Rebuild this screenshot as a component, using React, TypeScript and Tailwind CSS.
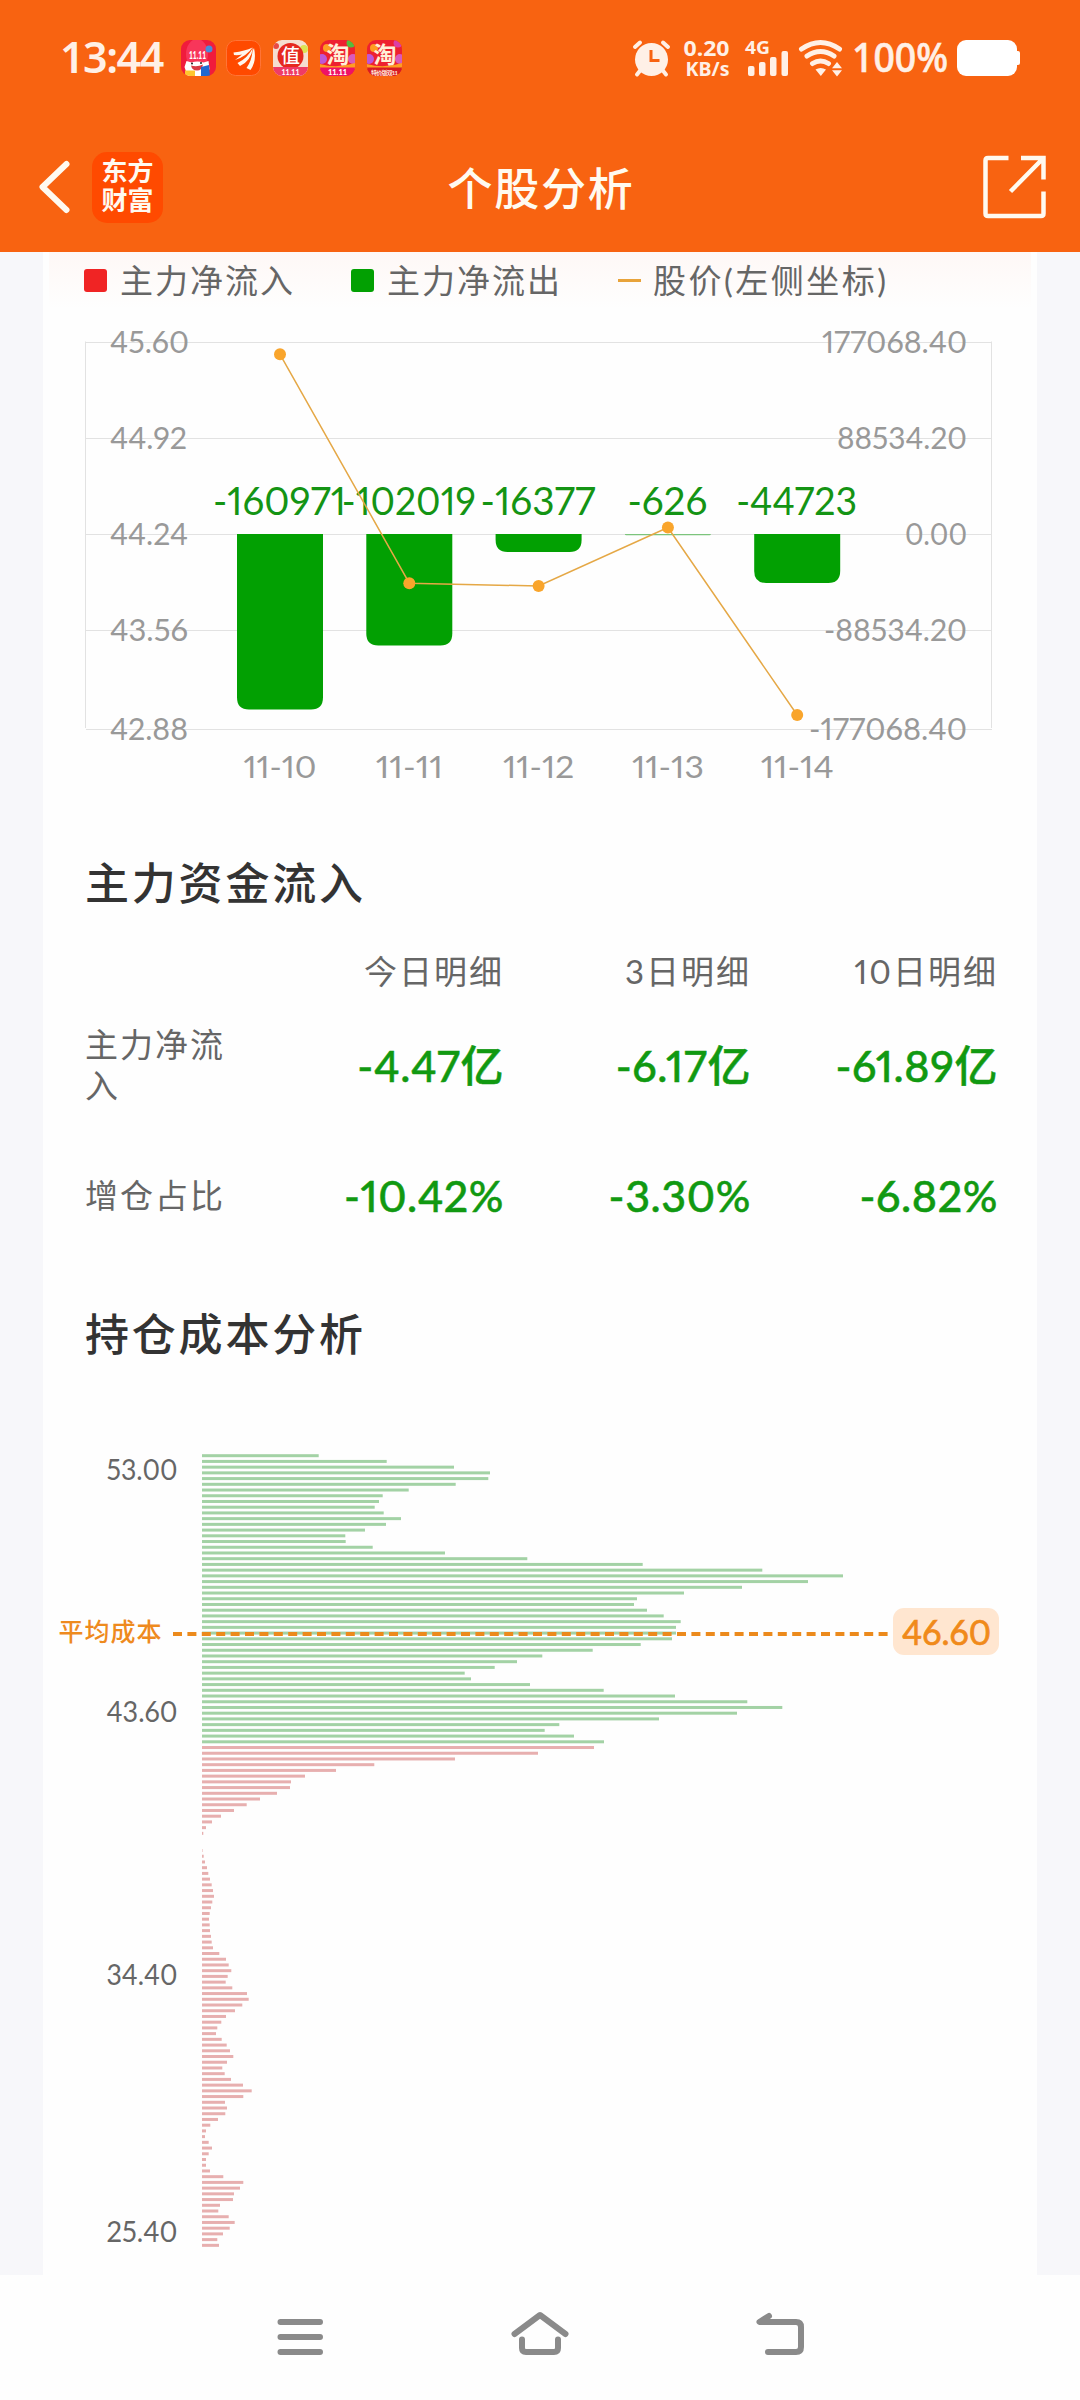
import { Fragment } from "react";

const GRID_LINES = [
  { y: 342.5, price: "45.60", left: 77, flow: "177068.40", right: 143 },
  { y: 438.5, price: "44.92", left: 75, flow: "88534.20", right: 128 },
  { y: 534.5, price: "44.24", left: 76, flow: "0.00", right: 60 },
  { y: 630.5, price: "43.56", left: 76, flow: "-88534.20", right: 141 },
  { y: 729.5, price: "42.88", left: 76, flow: "-177068.40", right: 156 },
];

const DAYS = [
  { date: "11-10", x: 280, flow: "-160971", flowWidth: 131, dateWidth: 71, bottom: 709.5, price: 354.3 },
  { date: "11-11", x: 409.3, flow: "-102019", flowWidth: 132, dateWidth: 65, bottom: 645.5, price: 583.2 },
  { date: "11-12", x: 538.6, flow: "-16377", flowWidth: 113, dateWidth: 69, bottom: 552, price: 586 },
  { date: "11-13", x: 667.9, flow: "-626", flowWidth: 78, dateWidth: 70, bottom: 535.3, price: 527.5 },
  { date: "11-14", x: 797.2, flow: "-44723", flowWidth: 119, dateWidth: 71, bottom: 583, price: 715 },
];

const COSTS = [
  116.7, 184.7, 252, 288, 286.3, 253.7, 206.7, 180.7, 177, 172.7, 181.7, 199, 184, 163, 143.3, 143.7, 170.7, 243,
  325.3, 440.7, 560.3, 641, 606, 540, 482, 435, 432, 445, 461.7, 478.7, 474, 474, 470, 438.7, 390.7, 340.3, 315,
  292.7, 262.7, 269, 328, 401.7, 473, 545.3, 580.3, 535, 457, 357.3, 342.7, 372, 402, 392, 336, 253, 172.3, 134,
  103, 89, 88, 75, 58, 44.7, 32, 19, 10, 4, 1.3, 0, 0, 0.5, 1.7, 3, 5, 6.3, 8, 9.7, 11, 12, 10.3, 9, 7.7, 7, 7.7,
  8, 9, 9.7, 11, 17.3, 24, 26.7, 29.3, 25.7, 23.7, 30.3, 45, 46.7, 40.3, 33, 24, 19.3, 15.3, 14, 19.7, 24.7, 28,
  31.3, 25, 20.3, 22.7, 29, 41, 49.7, 41.3, 23, 25, 23.3, 16, 8.3, 4, 3, 6.7, 10, 6.7, 4, 4, 8, 21.3, 41.3, 38, 32,
  31, 18, 16.3, 26.7, 32.7, 27.7, 21, 15.3, 17,
];

// rows from this index down are below the current price
const FIRST_RED = 51;

const COST_LABELS = [
  { y: 1480, text: "53.00" },
  { y: 1721.7, text: "43.60" },
  { y: 1984.7, text: "34.40" },
  { y: 2241.7, text: "25.40" },
];

const ROWS = [
  { label: "主力净流入", values: ["-4.47亿", "-6.17亿", "-61.89亿"], row: "mt-[33px] h-[82px]" },
  { label: "增仓占比", values: ["-10.42%", "-3.30%", "-6.82%"], row: "mt-[64px] h-[50px]" },
];

const AppIcons = () => (
  <svg width="222" height="36" viewBox="181 40 222 36" className="ml-[16px] shrink-0">
    <defs>
      <clipPath id="tiles">
        {[181, 226, 273, 320, 367].map((x) => (
          <rect key={x} x={x} y="40" width="35" height="36" rx="9" />
        ))}
      </clipPath>
    </defs>
    <g clipPath="url(#tiles)">
      {/* 11.11 mascot */}
      <rect x="181" y="40" width="35" height="36" fill="#f01c3c" />
      <ellipse cx="197" cy="54" rx="11" ry="15" fill="#f8365a" />
      <circle cx="209" cy="49" r="3.500" fill="#4a8bd8" />
      <path d="M184.500 67l2-6 5 1.500q6-2 12 0l5-1.500 1 8-3 7h-19z" fill="#fff" />
      <path d="M191 65.500q6 2 12-1-1 6-6 6t-6-5z" fill="#d93a44" />
      <circle cx="192" cy="63.500" r="1" fill="#222" />
      <circle cx="201" cy="63" r="1" fill="#222" />
      <rect x="185" y="70.500" width="10" height="6" fill="#ffc62d" />
      <path d="M201 67l8-2 1 11h-9z" fill="#2168cf" />
      <text x="197.500" y="59" textAnchor="middle" fontSize="11" fontWeight="900" fill="#fff" textLength="17" lengthAdjust="spacingAndGlyphs">
        11.11
      </text>

      {/* brokerage */}
      <rect x="226.5" y="40.5" width="34" height="35" rx="9" fill="#ff4a00" stroke="#ff7438" />
      <path
        d="M233.500 52.500Q245 51 252.500 47.500Q247 56 235 60Q239 57 242 54.500Q238 55.500 234 55Z"
        fill="#fff7ec"
      />
      <path d="M253 47.500Q251 61 240 66L237.500 63Q248 58 253 47.500Z" fill="#fff7ec" />
      <path d="M254 48Q257 61 250.500 70L246.500 68Q252 60 252.500 51Z" fill="#fff7ec" />

      {/* 值 */}
      <rect x="273" y="40" width="35" height="36" fill="#f5dfd0" />
      <circle cx="276" cy="46" r="3" fill="#e84b45" />
      <circle cx="304" cy="49" r="4" fill="#dce353" />
      <circle cx="290.500" cy="56" r="13" fill="#e6291f" />
      <rect x="273" y="67" width="35" height="9" fill="#ef3c66" />
      <text x="290.500" y="63" textAnchor="middle" fontSize="19" fontWeight="500" fill="#fff">
        值
      </text>
      <text x="290.500" y="74.500" textAnchor="middle" fontSize="7" fontWeight="700" fill="#fff">
        11.11
      </text>

      {/* 淘 */}
      {[320, 367].map((x) => (
        <Fragment key={x}>
          <rect x={x} y="40" width="35" height="36" fill="#ee2030" />
          <circle cx={x + 7} cy="48" r="4" fill="#ff9d22" />
          <circle cx={x + 2} cy="59" r="5" fill="#bd57d6" />
          <circle cx={x + 33} cy="59" r="5" fill="#d95abb" />
          <path d={`M${x} 64q17 5 35-1v6h-35z`} fill="#ff9d22" />
          <text x={x + 18} y="62.500" textAnchor="middle" fontSize="23" fontWeight="700" fill="#fff0d8">
            淘
          </text>
        </Fragment>
      ))}
      <circle cx="351" cy="43" r="4.500" fill="#55bd3c" />
      <circle cx="398" cy="43" r="4.500" fill="#dc3fa5" />
      <rect x="320" y="67.500" width="35" height="9" fill="#ee1266" />
      <rect x="367" y="67.500" width="35" height="9" fill="#d81a24" />
      <text x="337.500" y="75" textAnchor="middle" fontSize="7.500" fontWeight="900" fill="#fff">
        11.11
      </text>
      <text x="384.500" y="74.500" textAnchor="middle" fontSize="6" fontWeight="700" fill="#ffe4d6" textLength="27">
        特价版双11
      </text>
    </g>
  </svg>
);

const StatusIcons = () => (
  <svg width="390" height="60" viewBox="632 28 390 60" fill="#fff0e6" className="shrink-0">
    {/* alarm */}
    <g stroke="#fff0e6" strokeWidth="4" strokeLinecap="round">
      <path d="M635 47l5-4.500M668 47l-5-4.500M637 74.500l4-5M666 74.500l-4-5" />
    </g>
    <circle cx="651.500" cy="59.500" r="16.500" />
    <path d="M651 50v10.500h8.500" fill="none" stroke="#f86311" strokeWidth="3" />
    <g fontWeight="700" fontFamily="'Noto Sans'">
      <text x="683.500" y="55.500" fontSize="21.500" textLength="46" lengthAdjust="spacingAndGlyphs">
        0.20
      </text>
      <text x="685.500" y="75.500" fontSize="19.500" textLength="44" lengthAdjust="spacingAndGlyphs">
        KB/s
      </text>
      <text x="745" y="54" fontSize="18" textLength="25" lengthAdjust="spacingAndGlyphs">
        4G
      </text>
    </g>
    <rect x="748" y="66" width="6.500" height="10" rx="2" />
    <rect x="759" y="62" width="6.500" height="14" rx="2" />
    <rect x="770" y="57" width="6.500" height="19" rx="2" />
    <rect x="781.500" y="51" width="6.500" height="25" rx="2" />
    {/* wifi */}
    <g fill="none" stroke="#fff0e6" strokeWidth="5" strokeLinecap="round">
      <path d="M801.500 49q19-13 38 0" />
      <path d="M807 56q13.500-9 27 0" />
      <path d="M812.500 63.500q8-5 16 0" />
    </g>
    <path d="M815.500 69.500q5-3 10.500 0l-5.200 6.500z" />
    <path d="M837 62l5 6.200h-10zM837 76.500l5-6.200h-10z" />
    <text x="852" y="72" fontSize="39" fontFamily="'Noto Sans'" fontWeight="500" stroke="#fff0e6" strokeWidth="0.600" textLength="96" lengthAdjust="spacingAndGlyphs">
      100%
    </text>
    <rect x="957" y="40" width="60" height="36" rx="9" fill="#fff" />
    <rect x="1012" y="51" width="8" height="14" rx="2" fill="#fff" />
  </svg>
);

const Header = () => (
  <header className="h-[252px] bg-[#f86311] flex flex-col text-white">
    <div className="h-[116px] flex items-center justify-between pl-[60px] pr-[58px]">
      <div className="flex items-center">
        <span className="w-[105px] pb-[3px] text-[43px] leading-none font-semibold tracking-[-1.5px] text-[#fff0e6] font-['Noto_Sans'] whitespace-nowrap">
          13:44
        </span>
        <AppIcons />
      </div>
      <StatusIcons />
    </div>
    <div className="h-[136px] pt-[6px] flex items-center justify-between pl-[38px] pr-[33px]">
      <div className="flex items-center gap-[20px] w-[250px]">
        <svg width="34" height="56" viewBox="38 159 34 56">
          <path
            d="M66.500 164L42.500 187L66.500 210"
            fill="none"
            stroke="#fffaf0"
            strokeWidth="6"
            strokeLinecap="round"
            strokeLinejoin="round"
          />
        </svg>
        <div className="size-[71px] rounded-[15px] bg-[#ff4a00] flex flex-col items-center justify-center text-[26px] leading-[29px] pb-[2px] font-bold text-[#fffaf0]">
          <span>东方</span>
          <span>财富</span>
        </div>
      </div>
      <h1 className="text-[45px] leading-none font-medium tracking-[1.8px] pt-[4px] pr-[3px] text-[#fffaf0]">个股分析</h1>
      <div className="w-[250px] flex justify-end">
        <svg width="66" height="66" viewBox="981 153.500 66 66" fill="none" stroke="#fffaf0" strokeWidth="4.500">
          <path d="M1008.500 157.500H988q-2.500 0-2.500 2.500v53q0 2.500 2.500 2.500h53q2.500 0 2.500-2.500V191" />
          <path d="M1021 157.500h22.500V179M1043 158L1010.500 191" />
        </svg>
      </div>
    </div>
  </header>
);

const Legend = () => (
  <div className="mx-[6px] h-[57px] pl-[35px] flex items-center text-[33px] leading-none tracking-[2px] text-[#666] bg-linear-to-b from-[#fef8f6] to-[#fefefe]">
    <span className="size-[23px] rounded-[3px] bg-[#f02424] mr-[13px]" />
    <span className="w-[231px]">主力净流入</span>
    <span className="size-[23px] rounded-[3px] bg-[#02a002] mr-[13px]" />
    <span className="w-[231px]">主力净流出</span>
    <span className="w-[23px] h-[3px] bg-[#e8a33a] mr-[12px]" />
    <span className="tracking-[2.5px]">股价(左侧坐标)</span>
  </div>
);

const FlowChart = () => (
  <svg width="994" height="490" viewBox="43 309 994 490" className="block proportional-nums">
    <g stroke="#e2e2e2">
      {GRID_LINES.map((line) => (
        <path key={line.y} d={`M86 ${line.y}H992`} />
      ))}
      <path d="M85.500 341.500V728M991.500 341.500V728" />
    </g>
    <g fill="#999" fontSize="31">
      {GRID_LINES.map((line) => (
        <Fragment key={line.y}>
          <text x="110" y={line.y + 10.5} textLength={line.left + 2} lengthAdjust="spacingAndGlyphs">
            {line.price}
          </text>
          <text
            x="967"
            y={line.y + 10.5}
            textAnchor="end"
            textLength={line.right + 2}
            lengthAdjust="spacingAndGlyphs"
          >
            {line.flow}
          </text>
        </Fragment>
      ))}
      {DAYS.map((day) => (
        <text
          key={day.date}
          x={day.x}
          y="777.500"
          textAnchor="middle"
          textLength={day.dateWidth + 2}
          lengthAdjust="spacingAndGlyphs"
        >
          {day.date}
        </text>
      ))}
    </g>
    {DAYS.map((day) => {
      const r = Math.min(12, day.bottom - 534);
      return (
        <path
          key={day.date}
          d={`M${day.x - 43} 534V${day.bottom - r}q0 ${r} ${r} ${r}H${day.x + 43 - r}q${r} 0 ${r} ${-r}V534Z`}
          fill={day.bottom < 540 ? "#7cc47c" : "#02a002"}
        />
      );
    })}
    {DAYS.map((day) => (
      <text
        key={day.date}
        x={day.x - 0.5}
        y="515"
        textAnchor="middle"
        fontSize="38"
        fill="#149414"
        textLength={day.flowWidth + 2}
        lengthAdjust="spacingAndGlyphs"
      >
        {day.flow}
      </text>
    ))}
    <polyline
      points={DAYS.map((day) => `${day.x},${day.price}`).join(" ")}
      fill="none"
      stroke="#e5a846"
      strokeWidth="1.500"
    />
    {DAYS.map((day) => (
      <circle key={day.date} cx={day.x} cy={day.price} r="6" fill="#f9a52c" />
    ))}
  </svg>
);

const FlowTable = () => (
  <div className="pl-[42px] text-[33px] tracking-[2px] text-[#666] proportional-nums">
    <div className="grid grid-cols-[172px_247px_247px_247px] mt-[38px] h-[40px] items-center text-right leading-none">
      <span />
      <span>今日明细</span>
      <span>3日明细</span>
      <span>10日明细</span>
    </div>
    {ROWS.map((row) => (
      <div key={row.label} className={`grid grid-cols-[172px_247px_247px_247px] items-center ${row.row}`}>
        <span className="w-[145px] leading-[41px] break-all">{row.label}</span>
        {row.values.map((value) => (
          <span
            key={value}
            className="text-right text-[43px] leading-none tracking-[0.6px] font-medium text-[#119911] [-webkit-text-stroke:0.5px_#119911]"
          >
            {value}
          </span>
        ))}
      </div>
    ))}
  </div>
);

const CostChart = () => (
  <svg width="994" height="911" viewBox="43 1364 994 911" className="block proportional-nums">
    {COSTS.map((width, i) => (
      <rect
        key={i}
        x="202"
        y={1454.2 + i * 5.722}
        width={width}
        height="3"
        fill={i < FIRST_RED ? "#a3d2a5" : "#e7afaf"}
      />
    ))}
    {COST_LABELS.map((label) => (
      <text
        key={label.text}
        x="177.500"
        y={label.y}
        textAnchor="end"
        fontSize="28"
        fill="#666"
        textLength="71"
        lengthAdjust="spacingAndGlyphs"
      >
        {label.text}
      </text>
    ))}
    <text x="58.500" y="1641" fontSize="25" fontWeight="500" fill="#ee8a1e" textLength="103">
      平均成本
    </text>
    <path d="M173 1634H888" stroke="#ec8a1c" strokeWidth="3.800" strokeDasharray="9 5.400" />
    <rect x="893" y="1608" width="106" height="47" rx="11" fill="#ffe6d0" />
    <text
      x="946.500"
      y="1645"
      textAnchor="middle"
      fontSize="34"
      fill="#f08a1a"
      stroke="#f08a1a"
      strokeWidth="0.700"
      textLength="89"
      lengthAdjust="spacingAndGlyphs"
    >
      46.60
    </text>
  </svg>
);

const NavBar = () => (
  <nav className="h-[125px] bg-[#fefefe] flex items-center justify-center">
    <svg width="540" height="60" viewBox="270 2308 540 60" fill="none" stroke="#8a8a8a" strokeWidth="6" strokeLinecap="round" strokeLinejoin="round">
      <path d="M280.500 2322H320M280.500 2337H320M280.500 2352H320" />
      <path d="M514.500 2334L540 2315L565.500 2334M522 2339.500V2348q0 4 4 4H554q4 0 4-4V2339.500" />
      <path d="M769 2316L759.500 2322H796q5 0 5 5V2347q0 5-5 5H768" />
    </svg>
  </nav>
);

export default function App() {
  return (
    <div className="w-[1080px] h-[2400px] overflow-hidden flex flex-col bg-[#f7f7fa] font-[Lato,'Noto_Sans_CJK_SC',sans-serif]">
      <Header />
      <main className="mx-[43px] h-[2023px] bg-[#fefefe] flex flex-col">
        <Legend />
        <FlowChart />
        <h2 className="mt-[54px] h-[60px] pl-[42px] text-[44px] leading-[60px] tracking-[2.800px] font-medium text-[#333]">
          主力资金流入
        </h2>
        <FlowTable />
        <h2 className="mt-[84px] h-[60px] pl-[42px] text-[44px] leading-[60px] tracking-[2.800px] font-medium text-[#333]">
          持仓成本分析
        </h2>
        <CostChart />
      </main>
      <NavBar />
    </div>
  );
}
